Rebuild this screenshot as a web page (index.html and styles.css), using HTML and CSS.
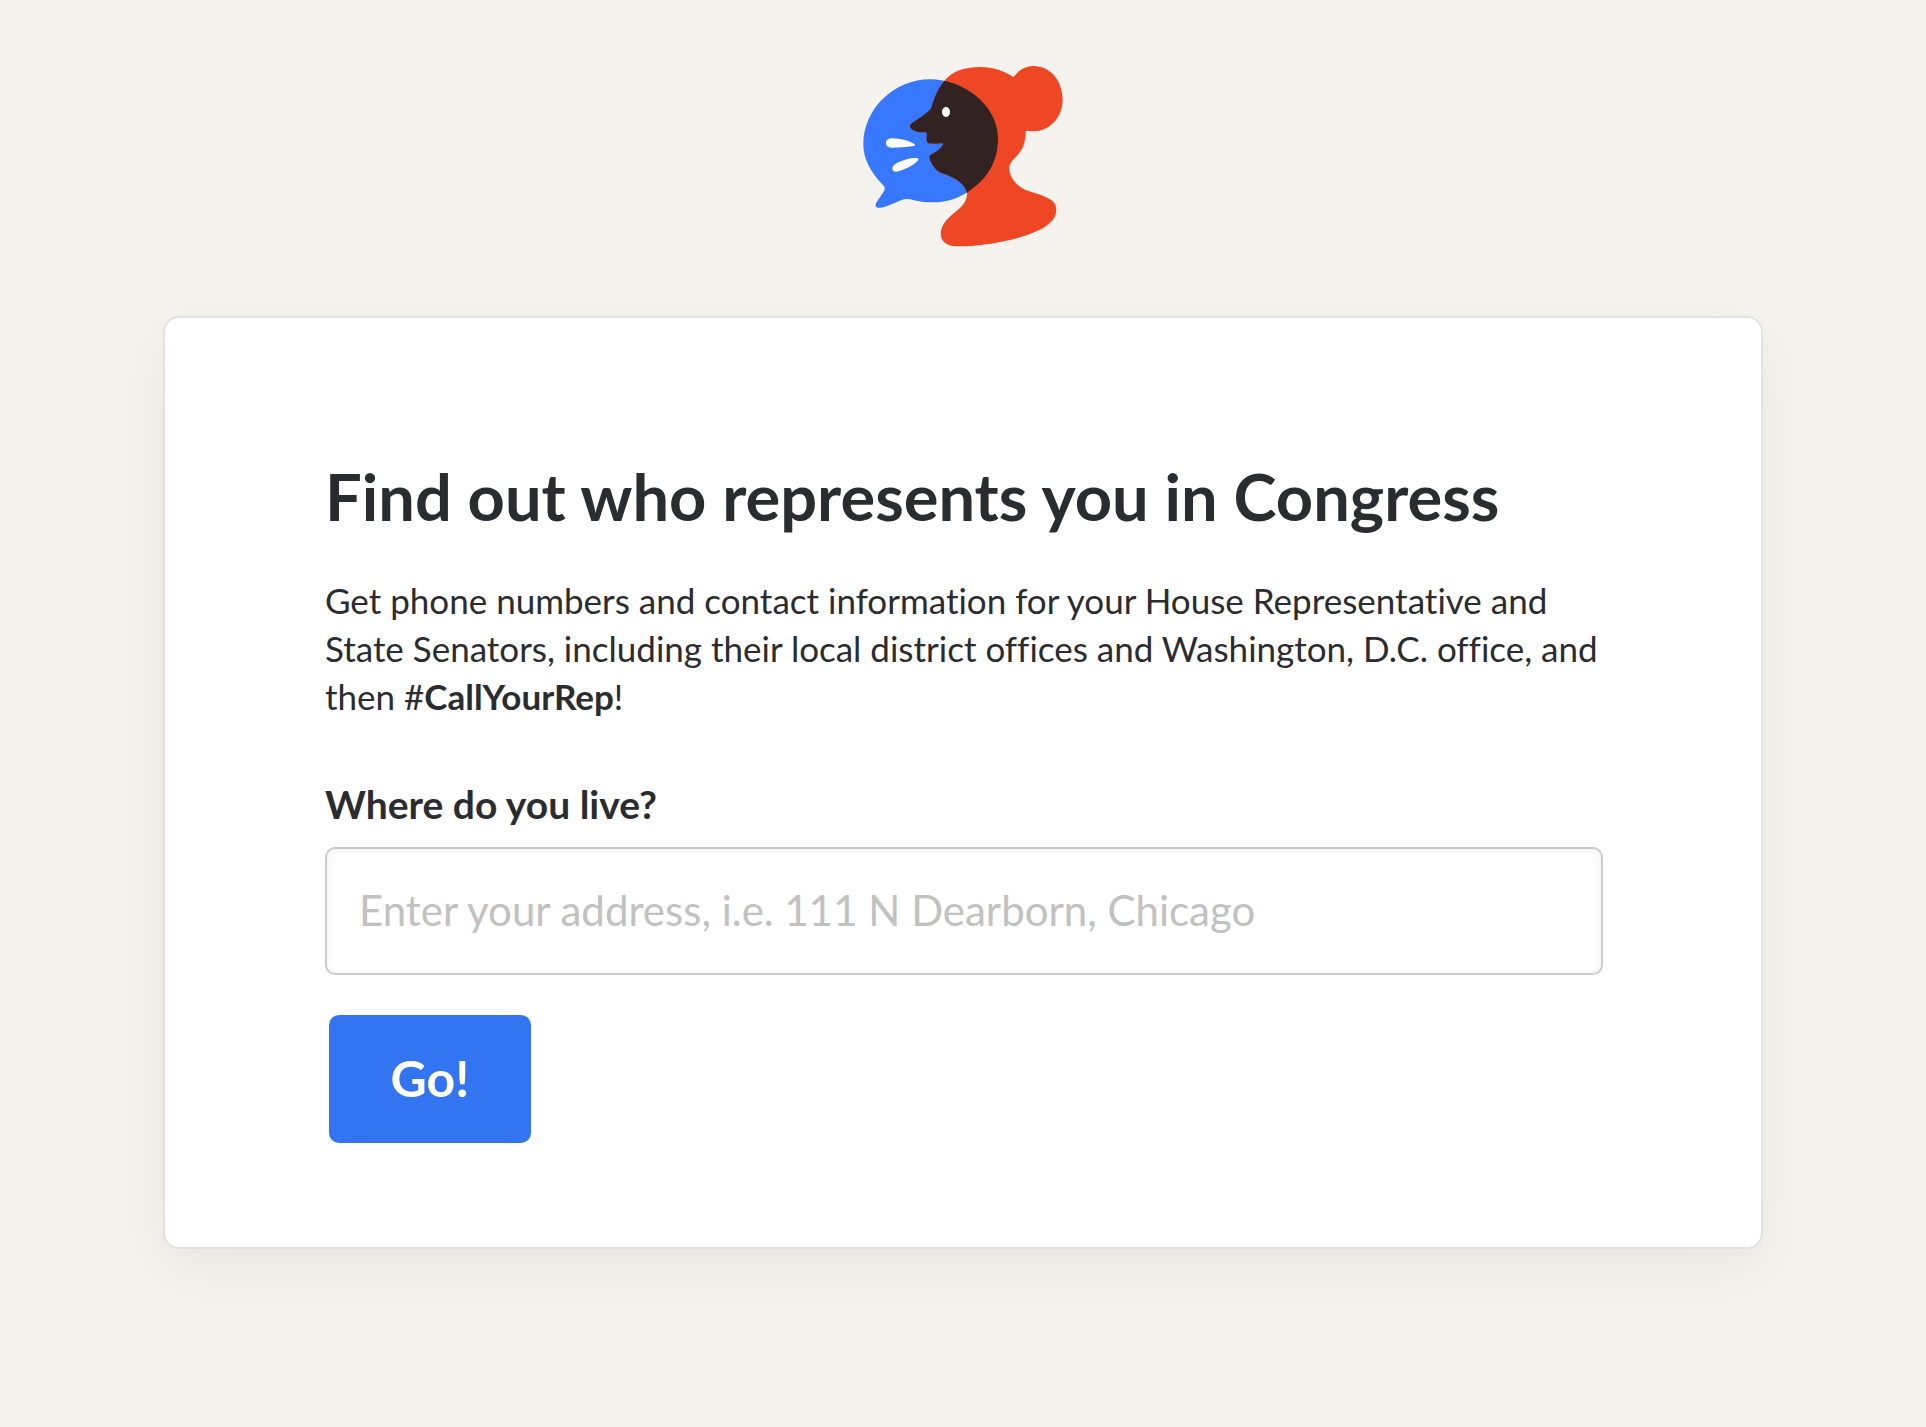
FILE: index.html
```html
<!DOCTYPE html>
<html lang="en">
<head>
<meta charset="utf-8">
<meta name="viewport" content="width=device-width, initial-scale=1">
<title>Call Your Rep</title>
<link rel="stylesheet" href="styles.css">
</head>
<body>
<header class="masthead">
  <svg class="logo" viewBox="3 0 675 615" role="img" aria-label="Call Your Rep">
    <defs>
      <clipPath id="bubble-clip"><use href="#bubble"/></clipPath>
    </defs>
    <path id="bubble" fill="#3878ff" d="M40 268C40 160 135 73 240 73C340 73 444 150 444 250C444 320 412 375 350 413C318 433 285 442 250 442C222 442 205 439 190 435C175 431 165 431 155 435C135 443 112 455 92 458C78 460 73 452 79 443C86 432 96 419 102 408C106 400 105 395 98 389C60 350 40 310 40 268Z"/>
    <path fill="#ef4723" d="M282 79C305 50 340 36 390 36C430 36 460 47 486 64C491 67 494 63 498 58C510 44 526 33 550 33C603 33 638 80 638 133C638 190 597 229 550 229C540 229 535 227 531 227C527 227 527 232 527 238C525 265 519 285 497 307C486 318 478 326 478 340C478 365 496 390 525 404C553 414 585 422 605 436C622 449 623 474 610 493C585 525 530 543 480 555C430 567 370 575 320 574C290 573 272 560 272 535C274 510 290 492 315 472C335 455 351 440 351 416C347 385 310 365 280 356C258 350 245 330 238 308C237 302 243 299 250 295C262 288 274 278 279 269C281 265 278 264 272 265C262 267 248 266 236 265C231 264 231 260 230 255C229 248 231 243 231 237C231 232 226 233 220 232C205 233 180 226 180 213C181 204 195 199 205 191C218 183 235 170 242 162C249 150 253 115 282 79Z"/>
    <path fill="#332222" clip-path="url(#bubble-clip)" d="M282 79C305 50 340 36 390 36C430 36 460 47 486 64L527 238L478 340L351 416C347 385 310 365 280 356C258 350 245 330 238 308C237 302 243 299 250 295C262 288 274 278 279 269C281 265 278 264 272 265C262 267 248 266 236 265C231 264 231 260 230 255C229 248 231 243 231 237C231 232 226 233 220 232C205 233 180 226 180 213C181 204 195 199 205 191C218 183 235 170 242 162C249 150 253 115 282 79Z"/>
    <g fill="#fff">
      <ellipse cx="288" cy="171" rx="12" ry="15"/>
      <path d="M108 264C108 254 118 250 128 250C150 251 175 256 193 267C197 270 195 272 190 273C170 277 145 278 125 278C113 277 108 273 108 264Z"/>
      <path d="M127 343C125 334 135 327 145 322C162 314 182 308 200 309C206 309 207 313 203 317C192 330 165 343 145 349C136 351 129 350 127 343Z"/>
    </g>
  </svg>
</header>
<main class="card">
  <h1 class="title">Find out who represents you in Congress</h1>
  <p class="intro">Get phone numbers and contact information for your House Representative and State Senators, including their local district offices and Washington, D.C. office, and then #<strong>CallYourRep</strong>!</p>
  <form class="lookup">
    <label class="lookup-label" for="address">Where do you live?</label>
    <input class="lookup-input" id="address" type="text" placeholder="Enter your address, i.e. 111 N Dearborn, Chicago">
    <button class="lookup-button" type="submit">Go!</button>
  </form>
</main>
</body>
</html>
```
FILE: styles.css
```css
* {
  box-sizing: border-box;
}

body {
  margin: 0;
  padding: 55px 32px 96px;
  background: #f6f3ee;
  color: #2b2c30;
  font-family: Lato, sans-serif;
  font-variant-ligatures: none;
}

.masthead {
  display: flex;
  justify-content: center;
  margin-bottom: 56px;
}

.logo {
  width: 225px;
  height: 205px;
}

.card {
  max-width: 1600px;
  margin: 0 auto;
  padding: 140px 158px 104px 160px;
  background: #fff;
  border: 2px solid #e1e1e1;
  border-radius: 16px;
  box-shadow: 0 20px 60px rgba(0, 0, 0, 0.06);
}

.title {
  margin: 0;
  font-size: 65px;
  font-weight: 700;
  line-height: 76px;
}

.intro {
  margin: 42px 0 60px;
  font-size: 35px;
  font-weight: 400;
  line-height: 48px;
}

.lookup {
  display: flex;
  flex-direction: column;
  align-items: flex-start;
}

.lookup-label {
  margin-bottom: 19px;
  font-size: 39px;
  font-weight: 700;
  line-height: 48px;
}

.lookup-input {
  width: 100%;
  height: 128px;
  padding: 0 32px 2px;
  border: 2px solid #ccc;
  border-radius: 10px;
  background: #fff;
  box-shadow: inset 0 2px 8px rgba(0, 0, 0, 0.06);
  color: inherit;
  font-family: inherit;
  font-size: 42px;
  font-weight: 400;
}

.lookup-input::placeholder {
  color: #c1c1c1;
  opacity: 1;
}

.lookup-button {
  min-width: 202px;
  height: 128px;
  margin: 40px 4px 0;
  padding: 0 56px 2px;
  border: 0;
  border-radius: 10px;
  background: #3375f0;
  color: #fff;
  font-family: inherit;
  font-size: 50px;
  font-weight: 700;
}
```
